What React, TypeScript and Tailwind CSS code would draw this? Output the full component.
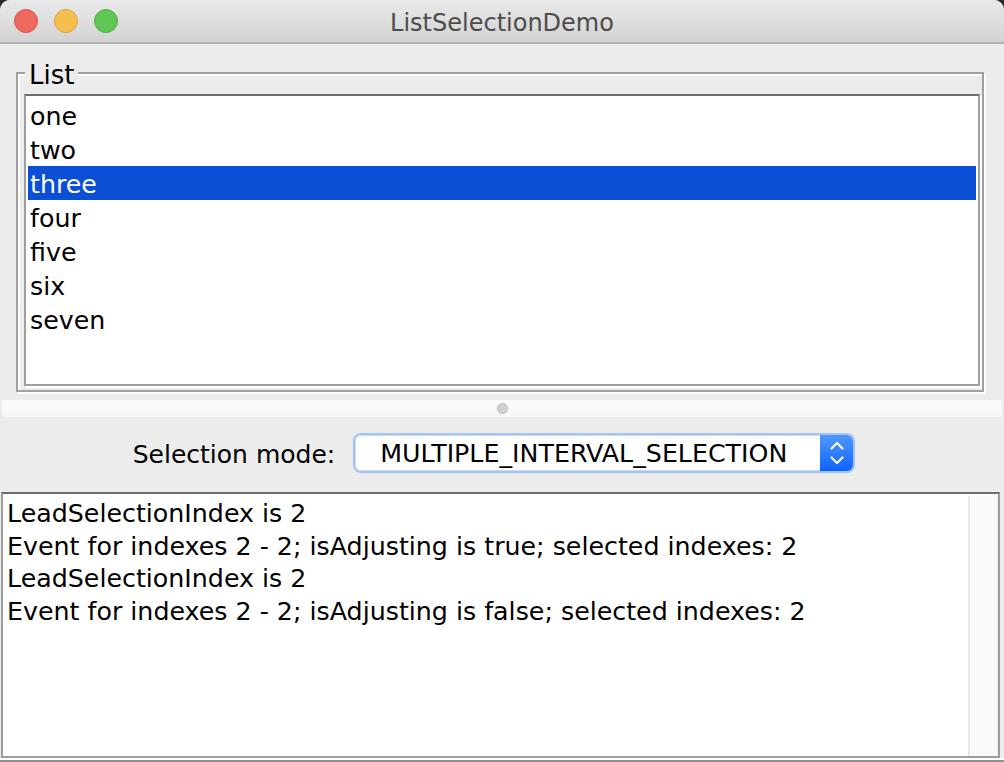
import React from "react";

const items = ["one", "two", "three", "four", "five", "six", "seven"];
const log = [
  "LeadSelectionIndex is 2",
  "Event for indexes 2 - 2; isAdjusting is true; selected indexes: 2",
  "LeadSelectionIndex is 2",
  "Event for indexes 2 - 2; isAdjusting is false; selected indexes: 2",
];

export default function App() {
  return (
    <div className="w-[1004px] h-[762px] bg-[#2a2a2a] overflow-hidden font-['DejaVu_Sans',sans-serif] text-black">
      <div className="w-full h-full bg-[#ececec] rounded-t-[10px] flex flex-col overflow-hidden">
        {/* Title bar */}
        <div className="h-[44px] shrink-0 bg-gradient-to-b from-[#e9e9e9] to-[#d3d3d3] border-b-2 border-[#b3b3b3] grid grid-cols-[1fr_auto_1fr] items-center">
          <div className="flex items-center gap-[16px] pl-[14px]">
            <div className="w-[24px] h-[24px] rounded-full bg-[#ee6a5f] border border-[#d85447]" />
            <div className="w-[24px] h-[24px] rounded-full bg-[#f5bf4f] border border-[#d9a23a]" />
            <div className="w-[24px] h-[24px] rounded-full bg-[#62c655] border border-[#4fa842]" />
          </div>
          <div className="text-[24px] leading-[28px] pt-[3px] text-[#4c4c4c]">ListSelectionDemo</div>
          <div />
        </div>

        {/* List group */}
        <div className="ml-[16px] mt-[28px] w-[968px] h-[320px] shrink-0 relative border-2 border-[#a0a0a0] shadow-[inset_2px_2px_0_#ffffff,2px_2px_0_#ffffff] pt-[20px] pl-[6px] pr-[2px] pb-[4px]">
          <div className="absolute left-[7px] top-[-14px] px-[4px] bg-[#ececec] text-[26px] leading-[30px]">List</div>
          <div className="w-[956px] h-[292px] bg-white border-2 border-[#9f9f9f] border-t-[#6d6d6d] p-[2px] shadow-[2px_2px_0_#ffffff]">
            {items.map((it) => (
              <div
                key={it}
                className={
                  it === "three"
                    ? "h-[34px] pt-[3px] leading-[31px] pl-[2px] text-[25.3px] bg-[#0b4fd6] text-white"
                    : "h-[34px] pt-[3px] leading-[31px] pl-[2px] text-[25.3px]"
                }
              >
                {it}
              </div>
            ))}
          </div>
        </div>

        {/* Split divider */}
        <div className="mt-[8px] mx-[2px] h-[17px] shrink-0 bg-gradient-to-b from-[#fcfcfc] to-[#f5f5f5] flex items-center justify-center">
          <div className="w-[11px] h-[11px] rounded-full bg-[#cfcfcf] border border-[#bdbdbd]" />
        </div>

        {/* Selection mode row */}
        <div className="mt-[16px] h-[40px] shrink-0 flex items-center justify-center gap-[18px] pr-[16px]">
          <div className="text-[25px] leading-[28px] pt-[3px]">Selection mode:</div>
          <div className="w-[502px] h-[40px] rounded-[8px] border-2 border-[#9fc4f5] bg-white flex overflow-hidden">
            <div className="flex-1 pl-[24px] pt-[2px] flex items-center text-[25.3px] leading-[28px] border border-r-0 border-[#c9dcf5] rounded-l-[6px]">
              MULTIPLE_INTERVAL_SELECTION
            </div>
            <div className="w-[33px] h-full bg-gradient-to-b from-[#4f97fc] to-[#0a62fe] flex items-center justify-center">
              <svg width="16" height="26" viewBox="0 0 16 26" fill="none">
                <path d="M2.5 8.5 L8 3 L13.5 8.5" stroke="#ffffff" strokeWidth="2.2" strokeLinecap="round" strokeLinejoin="round" />
                <path d="M2.5 17.5 L8 23 L13.5 17.5" stroke="#ffffff" strokeWidth="2.2" strokeLinecap="round" strokeLinejoin="round" />
              </svg>
            </div>
          </div>
        </div>

        {/* Text area */}
        <div className="mt-[19px] ml-[1px] w-[999px] h-[266px] shrink-0 bg-white border-2 border-[#9d9d9d] border-t-[#6b6b6b] flex">
          <div className="flex-1 pl-[4px] pt-[4px] text-[25.3px] leading-[32.7px] whitespace-pre">
            {log.map((l, i) => (
              <div key={i}>{l}</div>
            ))}
          </div>
          <div className="w-[30px] mt-[2px] bg-[#fafafa] border-l-2 border-[#e8e8e8] border-r border-r-[#eeeeee]" />
        </div>
        <div className="h-[2px] shrink-0 bg-white" />
        <div className="h-[2px] shrink-0 bg-[#8f8f8f]" />
      </div>
    </div>
  );
}
